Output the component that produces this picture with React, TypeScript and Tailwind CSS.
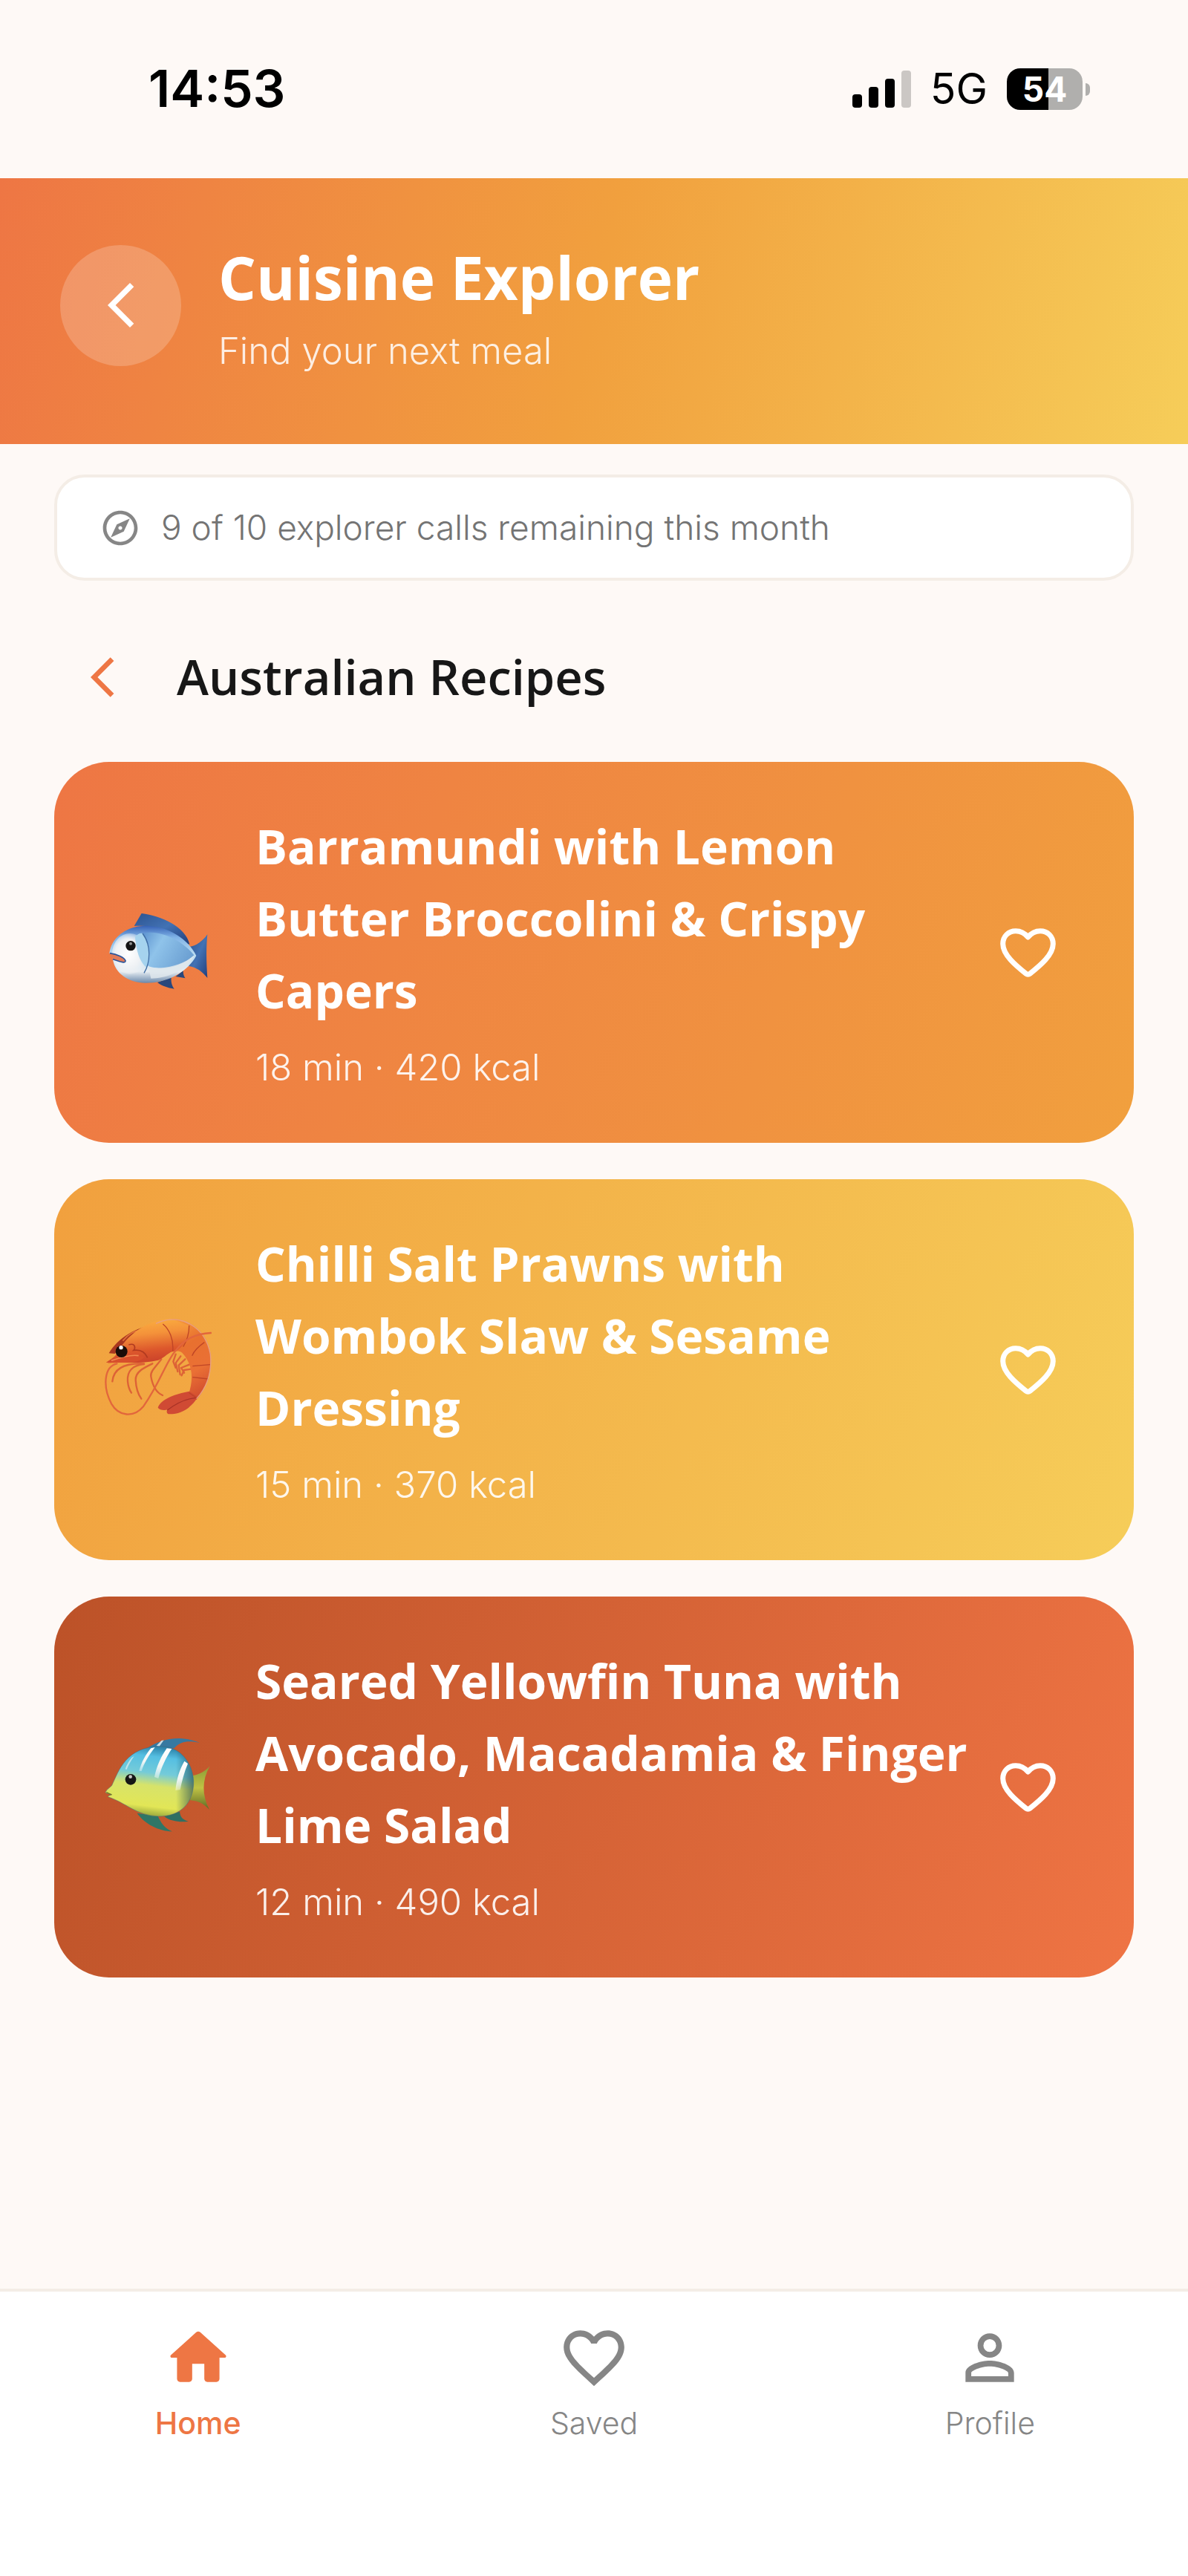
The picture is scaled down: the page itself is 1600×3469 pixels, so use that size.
import { useState } from 'react';
import type { FC, ReactNode } from 'react';
import {
  MdArrowBackIosNew,
  MdFavoriteBorder,
  MdOutlineExplore,
  MdPersonOutline,
} from 'react-icons/md';

interface Recipe {
  title: string;
  minutes: number;
  kcal: number;
  gradient: string;
  picture: ReactNode;
}

const BlueFish: FC = () => (
  <svg viewBox="54 27 438 438" className="w-[146px] h-[146px] shrink-0 overflow-visible" aria-hidden="true">
    <defs>
      <linearGradient id="bf-body" x1="0" y1="0" x2="0" y2="1">
        <stop offset="0" stopColor="#3561b5" />
        <stop offset="0.2" stopColor="#7fb2e6" />
        <stop offset="0.5" stopColor="#b9dcf2" />
        <stop offset="0.8" stopColor="#e6edf2" />
        <stop offset="1" stopColor="#6b89ab" />
      </linearGradient>
      <linearGradient id="bf-side" x1="0" y1="0" x2="1" y2="0.4">
        <stop offset="0" stopColor="#5c92cf" />
        <stop offset="0.4" stopColor="#8fc3ea" />
        <stop offset="1" stopColor="#6ea2d4" />
      </linearGradient>
      <linearGradient id="bf-fin" x1="0" y1="0" x2="1" y2="1">
        <stop offset="0" stopColor="#2c5390" />
        <stop offset="0.5" stopColor="#4272b4" />
        <stop offset="1" stopColor="#223f7c" />
      </linearGradient>
      <radialGradient id="bf-face" cx="0.45" cy="0.5" r="0.6">
        <stop offset="0" stopColor="#ffffff" />
        <stop offset="0.6" stopColor="#eef1f4" />
        <stop offset="1" stopColor="#eef1f4" stopOpacity="0" />
      </radialGradient>
    </defs>
    <path d="M182 138 L212 87 C290 96 390 140 406 212 L370 205 C310 150 250 132 182 138Z" fill="url(#bf-fin)" />
    <path d="M405 222 C435 218 460 198 478 172 C472 230 474 290 478 348 C460 325 435 304 402 300Z" fill="url(#bf-fin)" />
    <path d="M276 366 L332 346 C330 366 336 382 344 392 C318 388 294 380 276 366Z" fill="#28477c" />
    <path d="M350 342 L380 318 C380 334 384 342 389 349Z" fill="#28477c" />
    <path
      d="M82 248 C88 190 146 136 232 137 C320 139 400 190 433 258 C400 320 320 370 226 368 C160 366 104 330 96 272 C112 270 130 282 146 287 C152 274 110 258 82 248Z"
      fill="url(#bf-body)"
    />
    <ellipse cx="165" cy="250" rx="72" ry="82" fill="url(#bf-face)" />
    <path d="M215 168 C290 150 380 200 424 256 C390 290 330 312 280 308 C250 306 230 300 238 290 C252 250 240 205 215 168Z" fill="url(#bf-side)" />
    <path d="M240 305 C300 315 380 296 425 256 C400 312 320 350 250 350Z" fill="#dfe7ec" opacity="0.85" />
    <path d="M186 182 C196 170 206 166 216 168 C250 215 248 270 232 306 C206 286 190 240 186 182Z" fill="#a5d3ee" />
    <path d="M216 168 C252 215 248 285 222 328" fill="none" stroke="#3f6ea5" strokeWidth="4" />
    <path d="M84 248 C112 252 142 264 147 278 C148 290 130 284 96 272" fill="#e07a58" stroke="#2c5499" strokeWidth="5" />
    <circle cx="168" cy="218" r="20" fill="#141414" />
    <circle cx="168" cy="209" r="6" fill="#909090" />
  </svg>
);

const Shrimp: FC = () => (
  <svg viewBox="54 65 438 438" className="w-[146px] h-[146px] shrink-0 overflow-visible" aria-hidden="true">
    <defs>
      <linearGradient id="sh-body" x1="0.4" y1="0" x2="0.6" y2="1">
        <stop offset="0" stopColor="#fbb040" />
        <stop offset="0.35" stopColor="#f4923a" />
        <stop offset="0.7" stopColor="#dd582c" />
        <stop offset="1" stopColor="#c9402a" />
      </linearGradient>
      <linearGradient id="sh-back" x1="0.2" y1="0" x2="0.5" y2="1">
        <stop offset="0" stopColor="#f79a3c" />
        <stop offset="0.35" stopColor="#e8702f" />
        <stop offset="0.7" stopColor="#ea7035" />
        <stop offset="1" stopColor="#d4512f" />
      </linearGradient>
    </defs>
    <path d="M80 216 C120 150 190 112 270 98 C200 130 150 165 104 218Z" fill="#a9371f" />
    <path d="M136 166 C160 138 180 124 206 124 C220 112 240 108 262 104" fill="none" stroke="#e0703a" strokeWidth="5" />
    <g fill="none" stroke="#dd6236" strokeWidth="7" strokeLinecap="round" strokeLinejoin="round">
      <path d="M222 258 C170 256 100 262 94 330" />
      <path d="M222 260 C180 264 152 285 156 330 C158 352 164 366 171 376" />
      <path d="M256 258 C220 275 186 292 188 325 C190 360 200 385 211 400" />
      <path d="M292 240 C270 270 246 290 250 310 C256 345 270 375 297 386" />
      <path d="M350 220 L340 250 L350 275" />
      <path d="M370 228 L350 255 L358 290" />
      <path d="M388 240 L362 265 L368 302" />
      <path d="M405 262 L372 275 L384 295" />
      <path d="M412 280 L384 284 L374 306" />
    </g>
    <path
      d="M330 76 C420 76 492 150 492 240 C492 300 474 360 434 404 L402 382 C422 320 420 262 376 214 C362 204 350 208 336 210 L330 76Z"
      fill="url(#sh-back)"
    />
    <path
      d="M68 254 C92 238 106 230 112 216 C150 150 220 84 330 76 L405 105 C402 150 385 190 350 208 C325 205 305 236 280 244 C200 262 120 250 68 254Z"
      fill="url(#sh-body)"
    />
    <path d="M278 436 C290 400 350 380 404 370 L440 392 C410 440 370 464 320 462 C310 456 314 446 318 444 C302 448 286 446 278 436Z" fill="#d04a34" />
    <path d="M316 446 C350 420 390 400 432 396" fill="none" stroke="#a93327" strokeWidth="4" />
    <path
      d="M298 98 C325 120 342 160 338 208 M404 104 C404 140 396 165 380 190 M466 172 C440 190 425 205 416 226 M490 262 L418 268 M482 320 L418 313 M434 396 L404 376"
      fill="none"
      stroke="#bf4526"
      strokeWidth="4"
    />
    <path d="M270 96 C370 50 470 110 490 220 C498 300 470 360 434 400" fill="none" stroke="#e8a184" strokeWidth="4" />
    <path d="M160 182 C190 172 186 198 180 204 C210 200 228 215 236 234" fill="none" stroke="#b23a20" strokeWidth="5" />
    <path d="M74 256 C120 240 170 210 222 232 C200 262 120 250 74 256Z" fill="#d84f2c" />
    <path d="M90 246 C130 232 170 220 200 226" fill="none" stroke="#f28a50" strokeWidth="5" />
    <path
      d="M112 258 C60 270 54 350 90 420 C120 472 180 478 220 430 C290 330 310 250 350 205 C390 155 430 138 492 134"
      fill="none"
      stroke="#e2663c"
      strokeWidth="7"
      strokeLinecap="round"
    />
    <circle cx="131" cy="209" r="24" fill="#1a0c08" />
    <circle cx="129" cy="193" r="8" fill="#ffffff" />
  </svg>
);

const TropicalFish: FC = () => (
  <svg viewBox="54 69 438 438" className="w-[146px] h-[146px] shrink-0 overflow-visible" aria-hidden="true">
    <defs>
      <linearGradient id="tf-body" x1="0.6" y1="0" x2="0.45" y2="1">
        <stop offset="0" stopColor="#2b7fa6" />
        <stop offset="0.15" stopColor="#55bfe2" />
        <stop offset="0.38" stopColor="#74cbd9" />
        <stop offset="0.56" stopColor="#d7e36a" />
        <stop offset="0.85" stopColor="#e2e656" />
        <stop offset="1" stopColor="#93a33a" />
      </linearGradient>
      <linearGradient id="tf-shade" x1="0" y1="0" x2="1" y2="0">
        <stop offset="0.8" stopColor="#123b4a" stopOpacity="0" />
        <stop offset="1" stopColor="#123b4a" stopOpacity="0.6" />
      </linearGradient>
      <linearGradient id="tf-tail" x1="0" y1="0" x2="0" y2="1">
        <stop offset="0" stopColor="#8b9a35" />
        <stop offset="0.5" stopColor="#c0c344" />
        <stop offset="1" stopColor="#5d6a25" />
      </linearGradient>
      <linearGradient id="tf-stripe" x1="0" y1="0" x2="0" y2="1">
        <stop offset="0" stopColor="#ffffff" />
        <stop offset="0.6" stopColor="#f2f6f4" />
        <stop offset="1" stopColor="#ffffff" stopOpacity="0.35" />
      </linearGradient>
    </defs>
    <path d="M232 132 C270 104 330 84 390 92 C415 96 435 102 446 108 C410 100 370 98 344 130Z" fill="#3679a1" />
    <path d="M272 120 L292 99 L302 97 L284 122Z" fill="#c8dce5" />
    <path d="M418 240 C445 238 470 222 488 202 C455 260 456 320 486 378 C462 352 438 342 408 340Z" fill="url(#tf-tail)" />
    <path d="M194 392 L278 404 C290 430 306 455 336 466 C280 464 225 436 194 392Z" fill="#2f7666" />
    <path d="M304 406 L366 386 C368 408 380 420 402 425 C370 430 330 426 304 406Z" fill="#2f6f62" />
    <path
      d="M66 308 C70 296 84 290 92 280 C120 220 150 122 290 122 C370 122 418 190 422 262 C424 350 370 406 280 405 C190 402 150 350 76 326 C78 320 92 320 90 316 C82 314 72 314 66 308Z"
      fill="url(#tf-body)"
    />
    <path
      d="M66 308 C70 296 84 290 92 280 C120 220 150 122 290 122 C370 122 418 190 422 262 C424 350 370 406 280 405 C190 402 150 350 76 326 C78 320 92 320 90 316 C82 314 72 314 66 308Z"
      fill="url(#tf-shade)"
      stroke="#41667a"
      strokeOpacity="0.5"
      strokeWidth="3"
    />
    <path d="M250 130 L266 126 C240 160 222 190 212 222 L202 222 C212 185 228 156 250 130Z" fill="url(#tf-stripe)" />
    <path d="M314 130 L334 132 C312 165 290 210 280 252 L264 246 C274 200 290 165 314 130Z" fill="url(#tf-stripe)" />
    <path d="M385 182 L399 192 C385 225 374 265 368 298 L349 300 C354 250 366 215 385 182Z" fill="url(#tf-stripe)" />
    <path d="M172 168 L182 162 C168 182 158 200 152 216 L146 214 C152 196 160 182 172 168Z" fill="#e2f0f2" opacity="0.7" />
    <circle cx="168" cy="256" r="22" fill="#161616" />
    <circle cx="167" cy="245" r="7" fill="#c8c8c8" />
    <path d="M70 308 L92 318" fill="none" stroke="#6c7427" strokeWidth="4" />
  </svg>
);

const recipes: Recipe[] = [
  {
    title: 'Barramundi with Lemon Butter Broccolini & Crispy Capers',
    minutes: 18,
    kcal: 420,
    gradient: 'bg-[linear-gradient(109deg,#ee7644,#f1a03e)]',
    picture: <BlueFish />,
  },
  {
    title: 'Chilli Salt Prawns with Wombok Slaw & Sesame Dressing',
    minutes: 15,
    kcal: 370,
    gradient: 'bg-[linear-gradient(109deg,#f1a03e,#f6cd59)]',
    picture: <Shrimp />,
  },
  {
    title: 'Seared Yellowfin Tuna with Avocado, Macadamia & Finger Lime Salad',
    minutes: 12,
    kcal: 490,
    gradient: 'bg-[linear-gradient(109deg,#bc5228,#ef7444)]',
    picture: <TropicalFish />,
  },
];

const StatusBar: FC = () => (
  <div className="h-[240px] pl-[200px] pr-[132px] flex items-center justify-between text-black font-['Inter',sans-serif]">
    <span className="text-[69px] font-semibold">14:53</span>
    <div className="flex items-center gap-[26px]">
      <svg viewBox="0 0 79 50" className="w-[79px] h-[50px]" aria-label="Signal">
        <rect x="0" y="32" width="13" height="18" rx="4" />
        <rect x="22" y="22" width="13" height="28" rx="4" />
        <rect x="44" y="11" width="13" height="39" rx="4" />
        <rect x="66" y="0" width="13" height="50" rx="4" fill="#cbc7c4" />
      </svg>
      <span className="text-[57px]">5G</span>
      <div className="flex items-center gap-1">
        <div className="w-[102px] h-[56px] rounded-[18px] bg-[linear-gradient(90deg,#000_55%,#b0afad_55%)] flex items-center justify-center text-white text-[46px] leading-none font-bold">
          54
        </div>
        <div className="w-[6px] h-[17px] rounded-r-full bg-[#b0afad]" />
      </div>
    </div>
  </div>
);

const RecipeCard: FC<{ recipe: Recipe }> = ({ recipe }) => {
  const [saved, setSaved] = useState(false);

  return (
    <article className={`${recipe.gradient} rounded-[74px] py-[65px] pl-[65px] pr-[93px] flex items-center`}>
      {recipe.picture}
      <div className="flex-1 pl-[60px] flex flex-col gap-[19px] text-white">
        <h3 className="text-[64px] leading-[97px] font-bold font-['Open_Sans',sans-serif]">{recipe.title}</h3>
        <p className="text-[49px] leading-[73px] font-light text-white/90">
          {recipe.minutes} min · {recipe.kcal} kcal
        </p>
      </div>
      <button
        type="button"
        aria-label="Save recipe"
        aria-pressed={saved}
        onClick={() => setSaved(!saved)}
        className="w-[100px] h-[100px] shrink-0 flex items-center justify-center"
      >
        <svg viewBox="0 0 75 66" className="w-[75px] h-[66px]" aria-hidden="true">
          <path
            d="M37.5 12 C33 6.5 27 3.7 21 3.7 C11 3.7 3.7 11 3.7 21 C3.7 36 21 50 34.5 61 Q37.5 63.4 40.5 61 C54 50 71.3 36 71.3 21 C71.3 11 64 3.7 54 3.7 C48 3.7 42 6.5 37.5 12Z"
            fill={saved ? '#fff' : 'none'}
            stroke="#fff"
            strokeWidth="7"
            strokeLinejoin="round"
          />
        </svg>
      </button>
    </article>
  );
};

const HomeIcon: FC = () => (
  <svg viewBox="0 0 24 24" fill="currentColor" className="w-[98px] h-[98px]" aria-hidden="true">
    <path d="M10 19v-5h4v5c0 .55.45 1 1 1h3c.55 0 1-.45 1-1v-7h1.7c.46 0 .68-.57.33-.87L12.67 3.6c-.38-.34-.96-.34-1.34 0l-8.36 7.53c-.34.3-.13.87.33.87H5v7c0 .55.45 1 1 1h3c.55 0 1-.45 1-1z" />
  </svg>
);

const tabs = [
  { label: 'Home', icon: <HomeIcon />, active: true },
  { label: 'Saved', icon: <MdFavoriteBorder size={98} />, active: false },
  { label: 'Profile', icon: <MdPersonOutline size={98} />, active: false },
];

const App: FC = () => {
  return (
    <div className="min-h-screen flex flex-col bg-[#fef9f6] font-['Inter',sans-serif]">
      <StatusBar />

      <header className="bg-[linear-gradient(103deg,#ee7644,#f1a03e_50%,#f6cd59)] px-[81px] pt-[73px] pb-[89px] flex items-center gap-[50px] text-white">
        <button
          type="button"
          aria-label="Back"
          className="w-[163px] h-[163px] shrink-0 rounded-full bg-white/20 flex items-center justify-center"
        >
          <MdArrowBackIosNew size={72} />
        </button>
        <div className="flex flex-col gap-1">
          <h1 className="text-[80px] leading-[120px] font-bold font-['Open_Sans',sans-serif]">Cuisine Explorer</h1>
          <p className="text-[49px] leading-[72px] font-light text-white/85">Find your next meal</p>
        </div>
      </header>

      <main className="flex-1 px-[73px] pt-[41px] pb-[73px]">
        <div className="bg-white border-4 border-[#f4ede6] rounded-[41px] h-[143px] px-[57px] flex items-center gap-[27px] text-[#868686]">
          <MdOutlineExplore size={56} />
          <p className="text-[46px] font-light text-[#747474]">9 of 10 explorer calls remaining this month</p>
        </div>

        <div className="mt-[65px] mb-[49px] h-[130px] pl-[33px] flex items-center gap-[68px]">
          <button type="button" aria-label="Back to cuisines" className="text-[#ee7644]">
            <MdArrowBackIosNew size={64} />
          </button>
          <h2 className="text-[65px] font-semibold text-[#171717] font-['Open_Sans',sans-serif]">Australian Recipes</h2>
        </div>

        <div className="flex flex-col gap-[49px]">
          {recipes.map((recipe) => (
            <RecipeCard key={recipe.title} recipe={recipe} />
          ))}
        </div>
      </main>

      <nav className="bg-white border-t-4 border-[#f4ede6] pt-10 pb-[177px] grid grid-cols-3">
        {tabs.map((tab) => (
          <a
            key={tab.label}
            href="#"
            className={`flex flex-col items-center gap-[10px] text-[41px] leading-[58px] ${
              tab.active ? 'text-[#ee7644] font-medium' : 'text-[#868686] font-light'
            }`}
          >
            {tab.icon}
            {tab.label}
          </a>
        ))}
      </nav>
    </div>
  );
};

export default App;
